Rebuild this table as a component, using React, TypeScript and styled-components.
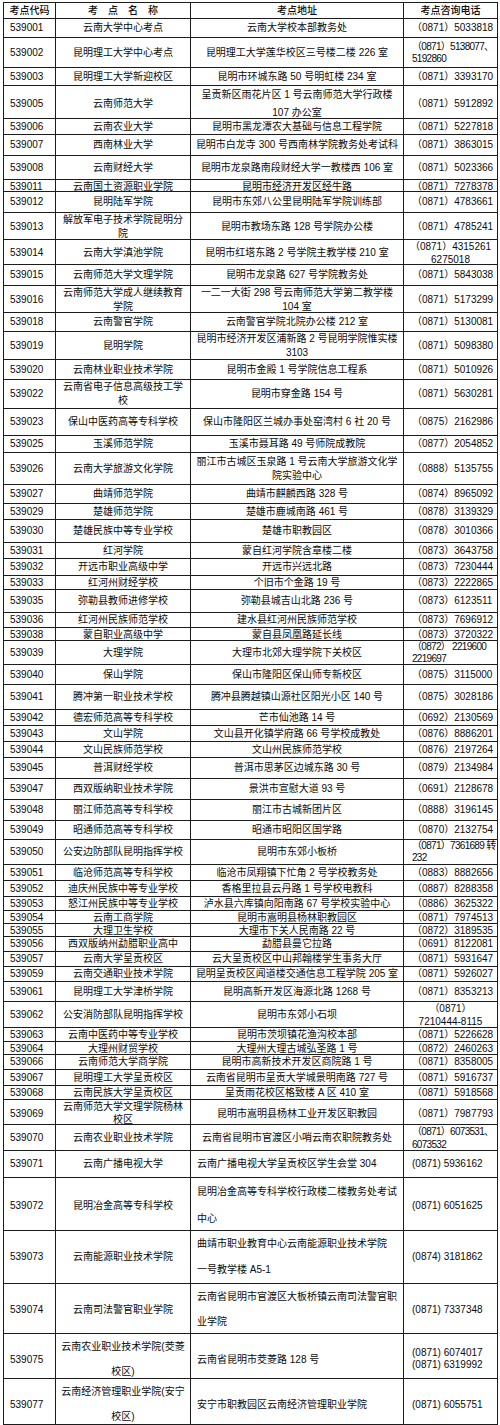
import React from 'react';
import styled, { createGlobalStyle } from 'styled-components';

const GlobalStyle = createGlobalStyle`
  html, body { margin: 0; padding: 0; background: #ffffff; }
  body {
    font-family: "Liberation Sans", "Noto Sans CJK SC", sans-serif;
    color: #0a0a0a;
  }
`;

type Align = 'left' | 'center';

interface RowData {
  code: string;
  name: string[];
  addr: string[];
  phone: string[];
  h: number;
  lh?: number;
  plh?: number;
  addrAlign?: Align;
  phoneAlign?: Align;
  tight?: boolean;
}

const rows: RowData[] = [
  { code: '539001', name: ['云南大学中心考点'], addr: ['云南大学校本部教务处'], phone: ['（0871）5033818'], h: 19 },
  { code: '539002', name: ['昆明理工大学中心考点'], addr: ['昆明理工大学莲华校区三号楼二楼 226 室'], phone: ['（0871）5138077、', '5192860'], h: 30, plh: 12, tight: true },
  { code: '539003', name: ['昆明理工大学新迎校区'], addr: ['昆明市环城东路 50 号明虹楼 234 室'], phone: ['（0871）3393170'], h: 18 },
  { code: '539005', name: ['云南师范大学'], addr: ['呈贡新区雨花片区 1 号云南师范大学行政楼', '107 办公室'], phone: ['（0871）5912892'], h: 33, lh: 18 },
  { code: '539006', name: ['云南农业大学'], addr: ['昆明市黑龙潭农大基础与信息工程学院'], phone: ['（0871）5227818'], h: 16 },
  { code: '539007', name: ['西南林业大学'], addr: ['昆明市白龙寺 300 号西南林学院教务处考试科'], phone: ['（0871）3863015'], h: 21 },
  { code: '539008', name: ['云南财经大学'], addr: ['昆明市龙泉路南段财经大学一教楼西 106 室'], phone: ['（0871）5023366'], h: 24 },
  { code: '539011', name: ['云南国土资源职业学院'], addr: ['昆明市经济开发区经牛路'], phone: ['（0871）7278378'], h: 12 },
  { code: '539012', name: ['昆明陆军学院'], addr: ['昆明市东郊八公里昆明陆军学院训练部'], phone: ['（0871）4783661'], h: 21 },
  { code: '539013', name: ['解放军电子技术学院昆明分', '院'], addr: ['昆明市教场东路 128 号学院办公楼'], phone: ['（0871）4785241'], h: 27 },
  { code: '539014', name: ['云南大学滇池学院'], addr: ['昆明市红塔东路 2 号学院主教学楼 210 室'], phone: ['（0871）4315261', '6275018'], h: 25, plh: 13, phoneAlign: 'center' },
  { code: '539015', name: ['云南师范大学文理学院'], addr: ['昆明市龙泉路 627 号学院教务处'], phone: ['（0871）5843038'], h: 21 },
  { code: '539016', name: ['云南师范大学成人继续教育', '学院'], addr: ['一二一大街 298 号云南师范大学第二教学楼', '104 室'], phone: ['（0871）5173299'], h: 27 },
  { code: '539018', name: ['云南警官学院'], addr: ['云南警官学院北院办公楼 212 室'], phone: ['（0871）5130081'], h: 19 },
  { code: '539019', name: ['昆明学院'], addr: ['昆明市经济开发区浦新路 2 号昆明学院惟实楼', '3103'], phone: ['（0871）5098380'], h: 28 },
  { code: '539020', name: ['云南林业职业技术学院'], addr: ['昆明市金殿 1 号学院信息工程系'], phone: ['（0871）5010926'], h: 20 },
  { code: '539022', name: ['云南省电子信息高级技工学', '校'], addr: ['昆明市穿金路 154 号'], phone: ['（0871）5630281'], h: 29 },
  { code: '539023', name: ['保山中医药高等专科学校'], addr: ['保山市隆阳区兰城办事处窑湾村 6 社 20 号'], phone: ['（0875）2162986'], h: 27 },
  { code: '539025', name: ['玉溪师范学院'], addr: ['玉溪市聂耳路 49 号师院成教院'], phone: ['（0877）2054852'], h: 17 },
  { code: '539026', name: ['云南大学旅游文化学院'], addr: ['丽江市古城区玉泉路 1 号云南大学旅游文化学', '院实验中心'], phone: ['（0888）5135755'], h: 32 },
  { code: '539027', name: ['曲靖师范学院'], addr: ['曲靖市麒麟西路 328 号'], phone: ['（0874）8965092'], h: 19 },
  { code: '539029', name: ['楚雄师范学院'], addr: ['楚雄市鹿城南路 461 号'], phone: ['（0878）3139329'], h: 16 },
  { code: '539030', name: ['楚雄民族中等专业学校'], addr: ['楚雄市职教园区'], phone: ['（0878）3010366'], h: 23 },
  { code: '539031', name: ['红河学院'], addr: ['蒙自红河学院含章楼二楼'], phone: ['（0873）3643758'], h: 16 },
  { code: '539032', name: ['开远市职业高级中学'], addr: ['开远市兴远北路'], phone: ['（0873）7230444'], h: 17 },
  { code: '539033', name: ['红河州财经学校'], addr: ['个旧市个金路 19 号'], phone: ['（0873）2222865'], h: 14 },
  { code: '539035', name: ['弥勒县教师进修学校'], addr: ['弥勒县城吉山北路 236 号'], phone: ['（0873）6123511'], h: 23 },
  { code: '539036', name: ['红河州民族师范学校'], addr: ['建水县红河州民族师范学校'], phone: ['（0873）7696912'], h: 15 },
  { code: '539038', name: ['蒙自职业高级中学'], addr: ['蒙自县凤凰路延长线'], phone: ['（0873）3720322'], h: 13 },
  { code: '539039', name: ['大理学院'], addr: ['大理市北郊大理学院下关校区'], phone: ['（0872） 2219600', '2219697'], h: 24, plh: 12, tight: true },
  { code: '539040', name: ['保山学院'], addr: ['保山市隆阳区保山师专新校区'], phone: ['（0875）3115000'], h: 20 },
  { code: '539041', name: ['腾冲第一职业技术学校'], addr: ['腾冲县腾越镇山源社区阳光小区 140 号'], phone: ['（0875）3028186'], h: 25 },
  { code: '539042', name: ['德宏师范高等专科学校'], addr: ['芒市仙池路 14 号'], phone: ['（0692）2130569'], h: 16 },
  { code: '539043', name: ['文山学院'], addr: ['文山县开化镇学府路 66 号学校成教处'], phone: ['（0876）8886201'], h: 16 },
  { code: '539044', name: ['文山民族师范学校'], addr: ['文山州民族师范学校'], phone: ['（0876）2197264'], h: 16 },
  { code: '539045', name: ['普洱财经学校'], addr: ['普洱市思茅区边城东路 30 号'], phone: ['（0879）2134984'], h: 21 },
  { code: '539047', name: ['西双版纳职业技术学院'], addr: ['景洪市宣慰大道 93 号'], phone: ['（0691）2128678'], h: 21 },
  { code: '539048', name: ['丽江师范高等专科学校'], addr: ['丽江市古城新团片区'], phone: ['（0888）3196145'], h: 21 },
  { code: '539049', name: ['昭通师范高等专科学校'], addr: ['昭通市昭阳区国学路'], phone: ['（0870）2132754'], h: 19 },
  { code: '539050', name: ['公安边防部队昆明指挥学校'], addr: ['昆明市东郊小板桥'], phone: ['（0871）7361689 转', '232'], h: 25, plh: 12, tight: true },
  { code: '539051', name: ['临沧师范高等专科学校'], addr: ['临沧市凤翔镇下忙角 2 号学校教务处'], phone: ['（0883）8882656'], h: 16 },
  { code: '539052', name: ['迪庆州民族中等专业学校'], addr: ['香格里拉县云丹路 1 号学校电教科'], phone: ['（0887）8288358'], h: 16 },
  { code: '539053', name: ['怒江州民族中等专业学校'], addr: ['泸水县六库镇向阳南路 67 号学校实验中心'], phone: ['（0886）3625322'], h: 14 },
  { code: '539054', name: ['云南工商学院'], addr: ['昆明市嵩明县杨林职教园区'], phone: ['（0871）7974513'], h: 13 },
  { code: '539055', name: ['大理卫生学校'], addr: ['大理市下关人民南路 22 号'], phone: ['（0872）3189535'], h: 13 },
  { code: '539056', name: ['西双版纳州勐腊职业高中'], addr: ['勐腊县曼它拉路'], phone: ['（0691）8122081'], h: 15 },
  { code: '539057', name: ['云南大学呈贡校区'], addr: ['云大呈贡校区中山邦翰楼学生事务大厅'], phone: ['（0871）5931647'], h: 15 },
  { code: '539059', name: ['云南交通职业技术学院'], addr: ['昆明呈贡校区闻道楼交通信息工程学院 205 室'], phone: ['（0871）5926027'], h: 15 },
  { code: '539061', name: ['昆明理工大学津桥学院'], addr: ['昆明高新开发区海源北路 1268 号'], phone: ['（0871）8353213'], h: 20 },
  { code: '539062', name: ['公安消防部队昆明指挥学校'], addr: ['昆明市东郊小石坝'], phone: ['（0871）', '7210444-8115'], h: 26, plh: 13, phoneAlign: 'center' },
  { code: '539063', name: ['云南中医药中等专业学校'], addr: ['昆明市茨坝镇花渔沟校本部'], phone: ['（0871）5226628'], h: 14 },
  { code: '539064', name: ['大理州财贸学校'], addr: ['大理州大理古城弘圣路 1 号'], phone: ['（0872）2460263'], h: 13 },
  { code: '539066', name: ['云南师范大学商学院'], addr: ['昆明市高新技术开发区商院路 1 号'], phone: ['（0871）8358005'], h: 15 },
  { code: '539067', name: ['昆明理工大学呈贡校区'], addr: ['云南省昆明市呈贡大学城景明南路 727 号'], phone: ['（0871）5916737'], h: 16 },
  { code: '539068', name: ['云南民族大学呈贡校区'], addr: ['呈贡雨花校区格致楼 A 区 410 室'], phone: ['（0871）5918568'], h: 14 },
  { code: '539069', name: ['云南师范大学文理学院杨林', '校区'], addr: ['昆明市嵩明县杨林工业开发区职教园'], phone: ['（0871）7987793'], h: 25, lh: 13 },
  { code: '539070', name: ['云南农业职业技术学院'], addr: ['云南省昆明市官渡区小哨云南农职院教务处'], phone: ['（0871）6073531、', '6073532'], h: 26, plh: 13, tight: true },
  { code: '539071', name: ['云南广播电视大学'], addr: ['云南广播电视大学呈贡校区学生会堂 304'], phone: ['(0871) 5936162'], h: 27, addrAlign: 'left' },
  { code: '539072', name: ['昆明冶金高等专科学校'], addr: ['昆明冶金高等专科学校行政楼二楼教务处考试', '中心'], phone: ['(0871) 6051625'], h: 53, lh: 27, addrAlign: 'left' },
  { code: '539073', name: ['云南能源职业技术学院'], addr: ['曲靖市职业教育中心云南能源职业技术学院', '一号教学楼 A5-1'], phone: ['(0874) 3181862'], h: 53, lh: 26, addrAlign: 'left' },
  { code: '539074', name: ['云南司法警官职业学院'], addr: ['云南省昆明市官渡区大板桥镇云南司法警官职', '业学院'], phone: ['(0871) 7337348'], h: 50, lh: 25, addrAlign: 'left' },
  { code: '539075', name: ['云南农业职业技术学院(茭菱', '校区)'], addr: ['云南省昆明市茭菱路 128 号'], phone: ['(0871) 6074017', '(0871) 6319992'], h: 45, lh: 25, plh: 12, addrAlign: 'left' },
  { code: '539077', name: ['云南经济管理职业学院(安宁', '校区)'], addr: ['安宁市职教园区云南经济管理职业学院'], phone: ['(0871) 6055751'], h: 46, lh: 25, addrAlign: 'left' },
];

const LINE = '#1c1c1c';

const Sheet = styled.div`
  width: 495px;
  margin: 2px 0 0 3px;
  border: 1px solid ${LINE};
  border-bottom: none;
  box-sizing: border-box;
`;

const Row = styled.div<{ $h: number }>`
  display: grid;
  grid-template-columns: 52px 135px 213px 93px;
  height: ${p => p.$h}px;
  border-bottom: 1px solid ${LINE};
  box-sizing: border-box;
`;

const Cell = styled.div<{ $lh: number }>`
  display: flex;
  flex-direction: column;
  justify-content: center;
  min-width: 0;
  box-sizing: border-box;
  border-right: 1px solid ${LINE};
  font-size: 10px;
  line-height: ${p => p.$lh}px;
  color: #0a0a0a;
  overflow: visible;
  &:last-child {
    border-right: none;
  }
`;

const HeadCell = styled(Cell)`
  align-items: center;
  font-weight: 500;
`;

const CodeCell = styled(Cell)`
  align-items: flex-start;
  padding-left: 6px;
`;

const NameCell = styled(Cell)`
  align-items: center;
  text-align: center;
`;

const AddrCell = styled(Cell)<{ $align: Align }>`
  align-items: ${p => (p.$align === 'left' ? 'flex-start' : 'center')};
  padding-left: ${p => (p.$align === 'left' ? '6px' : '0')};
`;

const PhoneCell = styled(Cell)<{ $align: Align; $tight: boolean }>`
  align-items: ${p => (p.$align === 'left' ? 'flex-start' : 'center')};
  padding-left: ${p => (p.$align === 'left' ? '8px' : '0')};
  letter-spacing: ${p => (p.$tight ? '-0.7px' : '0')};
`;

const Line = styled.span`
  display: block;
  white-space: pre;
`;

const Lines: React.FC<{ items: string[] }> = ({ items }) => (
  <>
    {items.map((t, i) => (
      <Line key={i}>{t}</Line>
    ))}
  </>
);

export default function App() {
  return (
    <>
      <GlobalStyle />
      <Sheet>
        <Row $h={16}>
          <HeadCell $lh={14}>考点代码</HeadCell>
          <HeadCell $lh={14}>考　点　名　称</HeadCell>
          <HeadCell $lh={14}>考点地址</HeadCell>
          <HeadCell $lh={14}>考点咨询电话</HeadCell>
        </Row>
        {rows.map(r => {
          const lh = r.lh ?? 14;
          return (
            <Row key={r.code} $h={r.h}>
              <CodeCell $lh={lh}>{r.code}</CodeCell>
              <NameCell $lh={lh}>
                <Lines items={r.name} />
              </NameCell>
              <AddrCell $lh={lh} $align={r.addrAlign ?? 'center'}>
                <Lines items={r.addr} />
              </AddrCell>
              <PhoneCell
                $lh={r.plh ?? lh}
                $align={r.phoneAlign ?? 'left'}
                $tight={!!r.tight}
              >
                <Lines items={r.phone} />
              </PhoneCell>
            </Row>
          );
        })}
      </Sheet>
    </>
  );
}
